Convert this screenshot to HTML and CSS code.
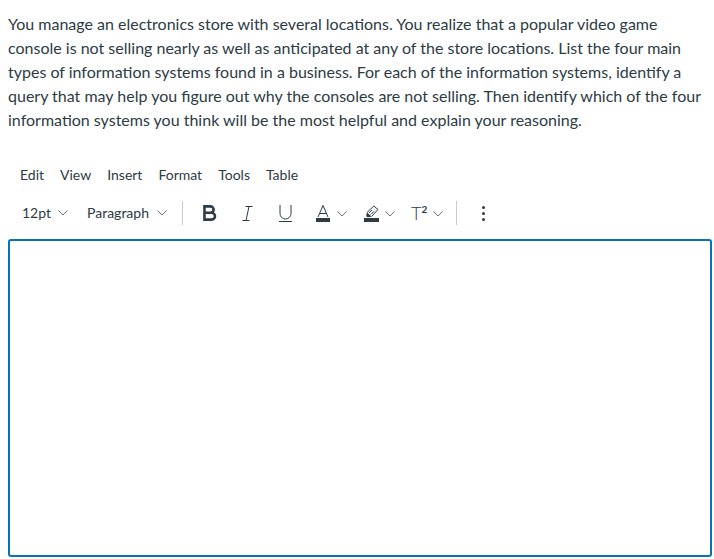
FILE: index.html
```html
<!DOCTYPE html>
<html lang="en">
<head>
    <meta charset="UTF-8">
    <meta name="viewport" content="width=device-width, initial-scale=1.0">
    <title>Question</title>
    <link rel="stylesheet" href="styles.css">
</head>
<body>
    <p class="question">You manage an electronics store with several locations. You realize that a popular video game<br>console is not selling nearly as well as anticipated at any of the store locations. List the four main<br>types of information systems found in a business. For each of the information systems, identify a<br>query that may help you figure out why the consoles are not selling. Then identify which of the four<br>information systems you think will be the most helpful and explain your reasoning.</p>
    <nav class="menubar">
        <span>Edit</span>
        <span>View</span>
        <span>Insert</span>
        <span>Format</span>
        <span>Tools</span>
        <span>Table</span>
    </nav>
    <div class="toolbar">
        <span class="tool-text size">12pt <svg class="chev" viewBox="0 0 10 6"><path d="M.5.5 5 5 9.500.5"/></svg></span>
        <span class="tool-text para">Paragraph <svg class="chev" viewBox="0 0 10 6"><path d="M.5.5 5 5 9.500.5"/></svg></span>
        <span class="divider first"></span>
        <svg class="icon bold" viewBox="0 0 13 15"><path d="M1.300 1.300h5.600a3 3 0 0 1 0 6H1.300zM1.300 7.300h6.700a3.200 3.200 0 0 1 0 6.400H1.300z"/></svg>
        <svg class="icon italic" viewBox="0 0 11 15"><path d="M3.500.5h7M.5 14.500h7M7 .5l-3 14"/></svg>
        <svg class="icon underline" viewBox="0 0 13 17"><path d="M1 0v8.500a5.500 5.500 0 0 0 11 0V0M0 16.500h13"/></svg>
        <span class="split color">
            <svg class="icon" viewBox="0 0 14 17"><path d="M2 12 7 .5 12 12M3.400 8.500h7.200"/><rect class="fill" x="0" y="13" width="14" height="4"/></svg>
            <svg class="chev" viewBox="0 0 10 6"><path d="M.5.5 5 5 9.500.5"/></svg>
        </span>
        <span class="split marker">
            <svg class="icon" viewBox="0 0 15 17"><path d="M3 7.500 9.800 1 14 4.500 7.500 11.500"/><path class="fill" d="M3 7.500 7.500 11.500 6 12 3.500 12.300 2.200 11 2.600 8.500z"/><path d="M5 8 8 4.800M6.800 9.500 10 6.300"/><rect class="fill" x="0" y="13" width="15" height="4"/></svg>
            <svg class="chev" viewBox="0 0 10 6"><path d="M.5.5 5 5 9.500.5"/></svg>
        </span>
        <span class="split super">
            <span class="t-label">T<sup>2</sup></span>
            <svg class="chev" viewBox="0 0 10 6"><path d="M.5.5 5 5 9.500.5"/></svg>
        </span>
        <span class="divider second"></span>
        <span class="more"><i></i><i></i><i></i></span>
    </div>
    <div class="editor"></div>
</body>
</html>
```

FILE: styles.css
```css
* {
    box-sizing: border-box;
}
body {
    font-family: Lato, Arial, sans-serif;
    margin: 0;
    padding: 0;
    background-color: white;
    color: #2d3b45;
    overflow: hidden;
}
.question {
    margin: 0;
    padding: 12px 0 0 8px;
    font-size: 16px;
    line-height: 24px;
    white-space: nowrap;
}
.menubar {
    display: flex;
    gap: 16px;
    margin-top: 34px;
    padding-left: 20px;
    font-size: 14px;
    line-height: 18px;
}
.toolbar {
    display: flex;
    align-items: center;
    height: 34px;
    margin-top: 12px;
    padding-left: 22px;
    font-size: 14px;
}
.tool-text {
    display: flex;
    align-items: center;
    gap: 7px;
    line-height: 16px;
    padding-bottom: 1px;
}
.para {
    gap: 8px;
    margin-left: 19px;
}
.chev {
    width: 10px;
    height: 6px;
    margin-top: 1px;
    fill: none;
    stroke: #6b7780;
    stroke-width: 1;
}
.divider {
    width: 1px;
    height: 24px;
    background-color: #c7cdd1;
}
.divider.first {
    margin-left: 15px;
}
.divider.second {
    margin-left: 13px;
}
.icon {
    flex: none;
    fill: none;
    stroke: #2d3b45;
    stroke-width: 1;
}
.icon .fill {
    fill: #2d3b45;
    stroke: none;
}
.bold {
    width: 14px;
    height: 16px;
    margin-left: 20px;
    stroke-width: 2.400;
}
.italic {
    width: 11px;
    height: 15px;
    margin-left: 25px;
}
.underline {
    width: 13px;
    height: 17px;
    margin-left: 26px;
}
.split {
    display: flex;
    align-items: center;
    gap: 6px;
}
.split .icon {
    width: 14px;
    height: 17px;
}
.color {
    gap: 7px;
    margin-left: 24px;
}
.marker {
    margin-left: 17px;
}
.marker .icon {
    width: 15px;
}
.super {
    margin-left: 16px;
}
.t-label {
    font-size: 18px;
    font-weight: 300;
    line-height: 18px;
    width: 16px;
    white-space: nowrap;
}
.t-label sup {
    font-size: 10px;
    font-weight: 700;
    line-height: 0;
    vertical-align: 7px;
}
.more {
    display: flex;
    flex-direction: column;
    gap: 3px;
    margin-left: 25px;
}
.more i {
    width: 3px;
    height: 3px;
    border-radius: 50%;
    background-color: #2d3b45;
}
.editor {
    width: 704px;
    height: 318px;
    margin: 9px 0 0 8px;
    border: 2px solid #0374b5;
    border-radius: 3px;
}
```
